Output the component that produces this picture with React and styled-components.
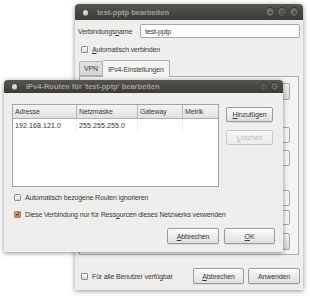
import React from 'react';
import styled, { createGlobalStyle } from 'styled-components';

const GlobalStyle = createGlobalStyle`
  html, body {
    margin: 0;
    padding: 0;
    background: #ffffff;
  }
  body {
    font-family: "Liberation Sans", Arial, sans-serif;
    font-size: 7px;
    color: #3c3c3c;
  }
  u {
    text-decoration-thickness: 0.5px;
    text-underline-offset: 1px;
  }
`;

const Desktop = styled.div`
  position: relative;
  width: 310px;
  height: 298px;
  overflow: hidden;
  background: #ffffff;
`;

const Window = styled.div`
  position: absolute;
  left: ${(p) => p.$x}px;
  top: ${(p) => p.$y}px;
  width: ${(p) => p.$w}px;
  height: ${(p) => p.$h}px;
  display: flex;
  flex-direction: column;
  background: #efeeec;
  border-radius: 4px 4px 0 0;
  box-shadow: 0 1px 5px rgba(0, 0, 0, 0.45);
`;

const TitleBar = styled.div`
  flex: none;
  height: ${(p) => p.$h}px;
  display: flex;
  align-items: center;
  padding: 0 4px 0 8px;
  border-radius: 4px 4px 0 0;
  background: linear-gradient(#56554f, #3c3b37);
  color: #a39f97;
  font-weight: bold;
  font-size: 7.5px;
`;

const TitleIcon = styled.span`
  width: 5px;
  height: 5px;
  border-radius: 50%;
  background: #d8d6d0;
  margin-right: 9px;
  box-shadow: 0 1px 0 #8a877f;
`;

const TitleText = styled.span`
  flex: 1;
  white-space: nowrap;
`;

const WinButtons = styled.div`
  display: flex;
  gap: 2px;
`;

const WinButton = styled.span`
  width: ${(p) => p.$size}px;
  height: ${(p) => p.$size}px;
  border-radius: 50%;
  background: radial-gradient(circle at 50% 40%, #77756f, #5a5953);
  border: 1px solid #36352f;
  box-sizing: border-box;
  display: flex;
  align-items: center;
  justify-content: center;
`;

const Body = styled.div`
  flex: 1;
  display: flex;
  flex-direction: column;
  padding: ${(p) => p.$pad};
  min-height: 0;
`;

const Row = styled.div`
  display: flex;
  align-items: center;
  gap: ${(p) => p.$gap || 0}px;
  margin-top: ${(p) => p.$mt || 0}px;
  height: ${(p) => (p.$h ? `${p.$h}px` : 'auto')};
  padding-left: ${(p) => p.$pl || 0}px;
`;

const Label = styled.span`
  white-space: nowrap;
  letter-spacing: -0.15px;
  color: #3a3a3a;
`;

const TextInput = styled.div`
  flex: 1;
  height: 14px;
  margin-left: 8px;
  box-sizing: border-box;
  border: 1px solid #a9a9a9;
  border-radius: 2px;
  background: #ffffff;
  display: flex;
  align-items: center;
  padding-left: 4px;
  letter-spacing: -0.15px;
  color: #333;
`;

const Box = styled.span`
  flex: none;
  width: 7px;
  height: 7px;
  box-sizing: border-box;
  border: 1px solid #8f8f8f;
  border-radius: 1px;
  background: ${(p) => (p.$checked ? 'linear-gradient(#f8a070, #e86a36)' : 'linear-gradient(#ffffff, #dcdcdc)')};
  margin-right: 4px;
  display: flex;
  align-items: center;
  justify-content: center;
`;

const Check = ({ label, checked, mt, pl }) => (
  <Row $mt={mt} $pl={pl} $h={10}>
    <Box $checked={checked}>
      {checked && (
        <svg width="6" height="6" viewBox="0 0 6 6">
          <path d="M1 3 L2.5 4.6 L5 1" stroke="#3a2a20" strokeWidth="1.1" fill="none" />
        </svg>
      )}
    </Box>
    <Label>{label}</Label>
  </Row>
);

const Button = styled.div`
  flex: none;
  width: ${(p) => p.$w}px;
  height: ${(p) => p.$h || 16}px;
  box-sizing: border-box;
  border: 1px solid ${(p) => (p.$disabled ? '#c9c9c9' : '#9b9b9b')};
  border-radius: 2px;
  background: ${(p) => (p.$disabled ? 'linear-gradient(#f6f6f6, #ebebeb)' : 'linear-gradient(#fbfbfb, #dedede)')};
  color: ${(p) => (p.$disabled ? '#b8b8b8' : '#3a3a3a')};
  display: flex;
  align-items: center;
  justify-content: center;
  letter-spacing: -0.15px;
  white-space: nowrap;
  box-shadow: ${(p) => (p.$disabled ? 'none' : '0 1px 0 rgba(0,0,0,0.08)')};
`;

const Tabs = styled.div`
  display: flex;
  align-items: flex-end;
  margin-top: 5px;
  margin-left: 1px;
  height: 17px;
`;

const Tab = styled.div`
  height: ${(p) => (p.$active ? 17 : 15)}px;
  box-sizing: border-box;
  padding: 0 ${(p) => (p.$active ? 5 : 4)}px;
  display: flex;
  align-items: center;
  border: 1px solid #b0b0b0;
  border-bottom: ${(p) => (p.$active ? 'none' : '1px solid #b0b0b0')};
  border-radius: 2px 2px 0 0;
  background: ${(p) => (p.$active ? '#f4f4f3' : 'linear-gradient(#e2e2e1, #d6d6d5)')};
  margin-left: ${(p) => (p.$active ? -1 : 0)}px;
  letter-spacing: -0.15px;
  position: relative;
  top: ${(p) => (p.$active ? 1 : 0)}px;
`;

const TabPanel = styled.div`
  margin-left: 1px;
  width: 220px;
  height: 179px;
  box-sizing: border-box;
  border: 1px solid #b0b0b0;
  background: #f4f4f3;
  display: flex;
  justify-content: flex-end;
  padding: 6px 8px 0 0;
`;

const StubColumn = styled.div`
  display: flex;
  flex-direction: column;
  width: 48px;
`;

const Stub = styled.div`
  height: ${(p) => p.$h}px;
  margin-top: ${(p) => p.$mt}px;
  box-sizing: border-box;
  border: 1px solid #a8a8a8;
  border-radius: 2px;
  background: ${(p) => (p.$gray ? 'linear-gradient(#f5f5f5, #d8d8d8)' : '#f7f7f7')};
`;

const Footer = styled.div`
  display: flex;
  align-items: center;
  margin-top: auto;
  gap: 4px;
`;

const Spacer = styled.div`
  flex: 1;
`;

const TopArea = styled.div`
  display: flex;
  gap: 7px;
`;

const Table = styled.div`
  width: 207px;
  height: 83px;
  box-sizing: border-box;
  border: 1px solid #a3a3a3;
  background: #ffffff;
  display: flex;
  flex-direction: column;
`;

const cols = [64, 61, 45, 35];

const TableRow = styled.div`
  display: grid;
  grid-template-columns: ${cols.map((c) => `${c}px`).join(' ')};
  height: ${(p) => p.$h}px;
`;

const HeadCell = styled.div`
  display: flex;
  align-items: center;
  padding-left: 2px;
  box-sizing: border-box;
  background: linear-gradient(#f4f4f4, #e0e0e0);
  border-right: 1px solid #b8b8b8;
  border-bottom: 1px solid #b0b0b0;
  letter-spacing: -0.15px;
  color: #3a3a3a;
  &:last-child {
    border-right: none;
  }
`;

const Cell = styled.div`
  display: flex;
  align-items: center;
  padding-left: 2px;
  box-sizing: border-box;
  border-right: 1px solid #ececec;
  letter-spacing: 0.1px;
  color: #333;
  &:last-child {
    border-right: none;
  }
`;

const SideButtons = styled.div`
  display: flex;
  flex-direction: column;
  gap: 8px;
  padding-top: 3px;
`;

const DialogFooter = styled.div`
  display: flex;
  justify-content: flex-end;
  gap: 5px;
  margin-top: auto;
`;

const CloseGlyph = () => (
  <svg width="5" height="5" viewBox="0 0 5 5">
    <path d="M1 1 L4 4 M4 1 L1 4" stroke="#2f2e2a" strokeWidth="1" />
  </svg>
);

const MaxGlyph = () => (
  <svg width="5" height="5" viewBox="0 0 5 5">
    <rect x="1" y="1" width="3" height="3" stroke="#2f2e2a" strokeWidth="0.8" fill="none" />
  </svg>
);

const MinGlyph = () => (
  <svg width="5" height="5" viewBox="0 0 5 5">
    <path d="M1 2.5 L4 2.5" stroke="#2f2e2a" strokeWidth="1" />
  </svg>
);

const App = () => (
  <Desktop>
    <GlobalStyle />

    <Window $x={75} $y={4} $w={228} $h={286}>
      <TitleBar $h={16}>
        <TitleIcon />
        <TitleText>test-pptp bearbeiten</TitleText>
        <WinButtons>
          <WinButton $size={10}><MinGlyph /></WinButton>
          <WinButton $size={10}><MaxGlyph /></WinButton>
          <WinButton $size={10}><CloseGlyph /></WinButton>
        </WinButtons>
      </TitleBar>
      <Body $pad="4px 3px 6px 3px">
        <Row $h={14}>
          <Label>Verbindungs<u>n</u>ame</Label>
          <TextInput>test-pptp</TextInput>
        </Row>
        <Check mt={6} pl={3} label={<><u>A</u>utomatisch verbinden</>} />
        <Tabs>
          <Tab>VPN</Tab>
          <Tab $active>IPv4-Einstellungen</Tab>
        </Tabs>
        <TabPanel>
          <StubColumn>
            <Stub $gray $h={17} $mt={0} />
            <Stub $h={16} $mt={27} />
            <Stub $h={16} $mt={7} />
            <Stub $h={16} $mt={24} />
            <Stub $h={15} $mt={4} />
            <Stub $gray $h={17} $mt={8} />
          </StubColumn>
        </TabPanel>
        <Footer>
          <Check pl={3} label="Für alle Benutzer verfügbar" />
          <Spacer />
          <Button $w={51}><u>A</u>bbrechen</Button>
          <Button $w={52}>Anwenden</Button>
        </Footer>
      </Body>
    </Window>

    <Window $x={4} $y={80} $w={279} $h={172}>
      <TitleBar $h={13}>
        <TitleIcon />
        <TitleText>IPv4-Routen für 'test-pptp' bearbeiten</TitleText>
        <WinButtons>
          <WinButton $size={9}><MaxGlyph /></WinButton>
          <WinButton $size={9}><CloseGlyph /></WinButton>
        </WinButtons>
      </TitleBar>
      <Body $pad="11px 8px 8px 8px">
        <TopArea>
          <Table>
            <TableRow $h={14}>
              <HeadCell>Adresse</HeadCell>
              <HeadCell>Netzmaske</HeadCell>
              <HeadCell>Gateway</HeadCell>
              <HeadCell>Metrik</HeadCell>
            </TableRow>
            <TableRow $h={12}>
              <Cell>192.168.121.0</Cell>
              <Cell>255.255.255.0</Cell>
              <Cell />
              <Cell />
            </TableRow>
          </Table>
          <SideButtons>
            <Button $w={47} $h={15}><u>H</u>inzufügen</Button>
            <Button $w={47} $h={15} $disabled><u>L</u>öschen</Button>
          </SideButtons>
        </TopArea>
        <Check mt={5} pl={2} label={<>Automatisch bezogene Routen i<u>g</u>norieren</>} />
        <Check mt={7} pl={2} checked label={<>Diese Verbindung nur für Ress<u>o</u>urcen dieses Netzwerks verwenden</>} />
        <DialogFooter>
          <Button $w={52}><u>A</u>bbrechen</Button>
          <Button $w={51}><u>O</u>K</Button>
        </DialogFooter>
      </Body>
    </Window>
  </Desktop>
);

export default App;
